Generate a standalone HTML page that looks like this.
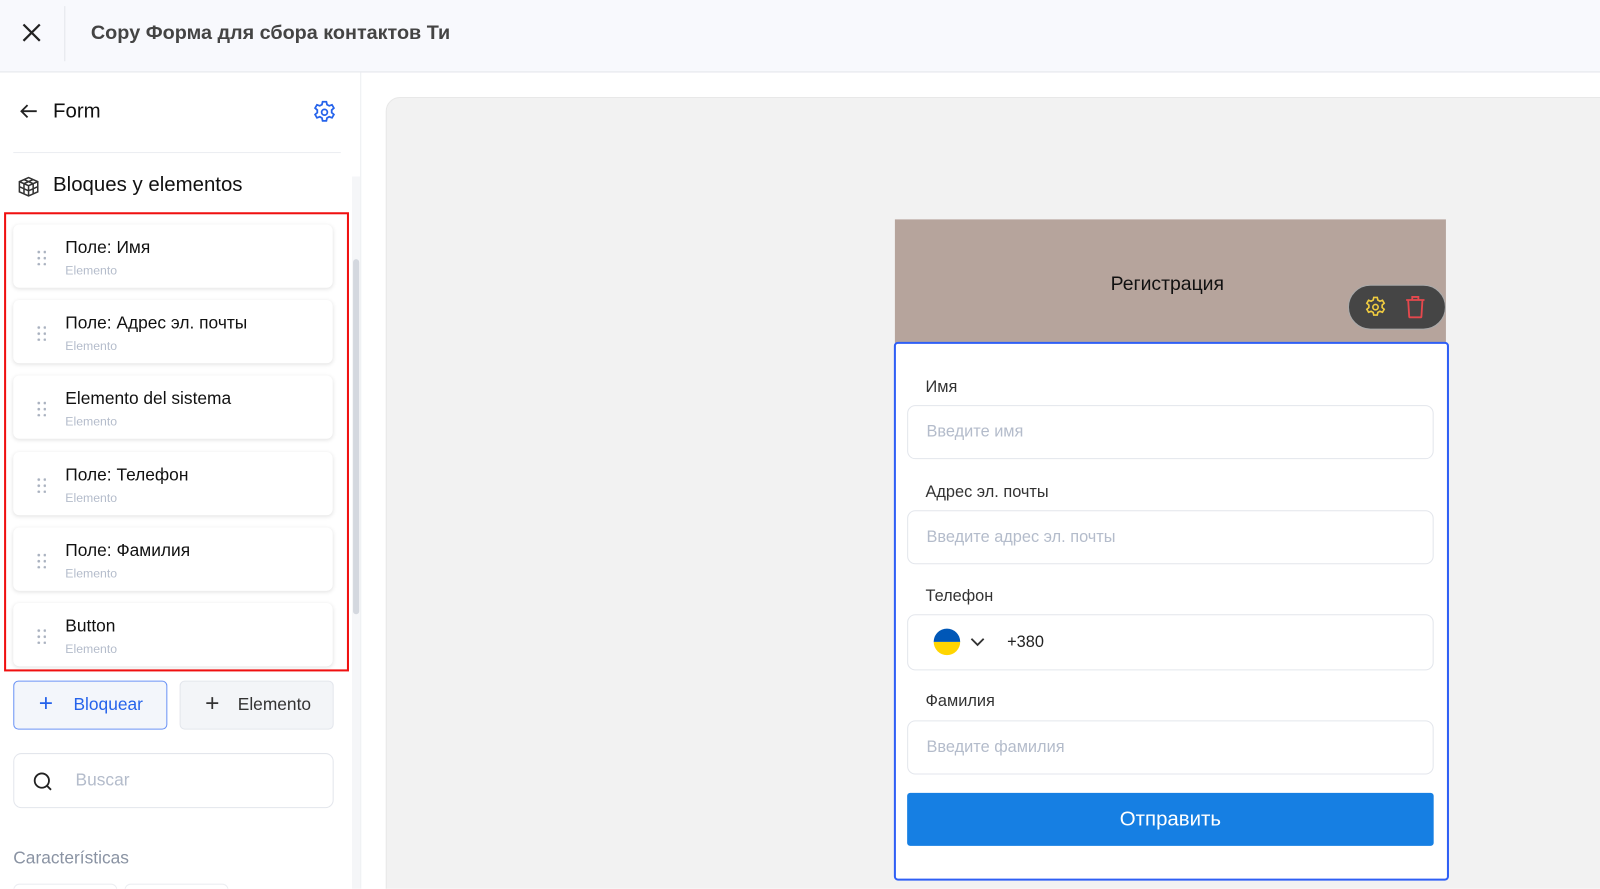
<!DOCTYPE html>
<html><head><meta charset="utf-8"><style>
*{box-sizing:border-box;margin:0;padding:0}
html,body{width:1600px;height:889px;overflow:hidden}
body{font-family:"Liberation Sans","Noto Sans CJK SC",sans-serif;background:#fff;color:#111}
#clip{position:relative;width:1600px;height:889px;overflow:hidden}
#w{position:absolute;left:0;top:0;width:1568px;height:871px;overflow:hidden;transform:scale(1.020408);transform-origin:0 0}
.hdr{position:absolute;left:0;top:0;width:1568px;height:71px;background:#f8f9fd;border-bottom:1px solid #e3e5ea}
.side{position:absolute;left:0;top:71px;width:354px;height:800px;border-right:1px solid #eceef2;background:#fff}
.card{position:absolute;left:13px;width:313px;height:62px;background:#fff;border-radius:6px;box-shadow:0 1px 4px rgba(0,0,0,.12)}
.card .t{position:absolute;left:51px;top:13px;font-size:17px;color:#111}
.card .s{position:absolute;left:51px;top:38px;font-size:12px;color:#b4bccb}
.dots{position:absolute;left:22px;top:24px;width:10px;height:16px;background-image:radial-gradient(circle,#a9b1bf 1.2px,transparent 1.5px);background-size:6px 6px}
.canvas{position:absolute;left:378px;top:95px;width:1240px;height:800px;background:#f2f2f2;border-radius:14px;border:1px solid #e8e8e8}
.lbl{position:absolute;left:907px;font-size:16px;color:#333}
.inp{position:absolute;left:889px;width:516px;height:53px;border:1px solid #e3e6ec;border-radius:8px;background:#fff;font-size:16px;color:#b4bccb;padding:17px 0 0 18px}
</style></head><body><div id="clip"><div id="w">
<div class="hdr">
<svg style="position:absolute;left:21px;top:22px" width="20" height="20" viewBox="0 0 20 20"><path d="M2 2L18 18M18 2L2 18" stroke="#222" stroke-width="2.2"/></svg>
<div style="position:absolute;left:63px;top:6px;width:1px;height:54px;background:#e3e5ea"></div>
<div style="position:absolute;left:89px;top:21px;font-size:19.4px;font-weight:bold;color:#444">Copy Форма для сбора контактов Ти</div>
</div>
<div class="side">
<svg style="position:absolute;left:18px;top:30px" width="20" height="16" viewBox="0 0 20 16"><path d="M18 8H3M9 2L3 8L9 14" stroke="#222" stroke-width="1.8" fill="none"/></svg>
<div style="position:absolute;left:52px;top:27px;font-size:20px">Form</div>
<svg style="position:absolute;left:305px;top:26px" width="26" height="26" viewBox="0 0 24 24" fill="none" stroke="#2563eb" stroke-width="1.6"><path d="M10.3 2.5h3.4l.6 2.6 2 1.1 2.5-.9 1.7 2.9-2 1.8v2.3l2 1.8-1.7 2.9-2.5-.9-2 1.1-.6 2.6h-3.4l-.6-2.6-2-1.1-2.5.9-1.7-2.9 2-1.8V10l-2-1.8 1.7-2.9 2.5.9 2-1.1z"/><circle cx="12" cy="12" r="2.6"/></svg>
<div style="position:absolute;left:13px;top:78px;width:321px;height:1px;background:#eceef2"></div>
<svg style="position:absolute;left:17px;top:101px" width="22" height="22" viewBox="0 0 22 22" fill="none" stroke="#333" stroke-width="1.5"><path d="M11 2L20 6V16L11 20L2 16V6Z M2 6L11 10L20 6 M11 10V20 M6.5 4L15.5 8V18 M15.5 4L6.5 8V18 M2 11L11 15L20 11"/></svg>
<div style="position:absolute;left:52px;top:99px;font-size:20px">Bloques y elementos</div>
<div style="position:absolute;left:345px;top:102px;width:8px;height:700px;background:#f5f6f8"></div>
<div style="position:absolute;left:346px;top:183px;width:6px;height:348px;background:#d4d8df;border-radius:3px"></div>
</div>
<div class="card" style="top:220px"><div class="dots"></div><div class="t">Поле: Имя</div><div class="s">Elemento</div></div>
<div class="card" style="top:294px"><div class="dots"></div><div class="t">Поле: Адрес эл. почты</div><div class="s">Elemento</div></div>
<div class="card" style="top:368px"><div class="dots"></div><div class="t">Elemento del sistema</div><div class="s">Elemento</div></div>
<div class="card" style="top:443px"><div class="dots"></div><div class="t">Поле: Телефон</div><div class="s">Elemento</div></div>
<div class="card" style="top:517px"><div class="dots"></div><div class="t">Поле: Фамилия</div><div class="s">Elemento</div></div>
<div class="card" style="top:591px"><div class="dots"></div><div class="t">Button</div><div class="s">Elemento</div></div>
<div style="position:absolute;left:4px;top:208px;width:338px;height:450px;border:2px solid #f01010"></div>
<div style="position:absolute;left:13px;top:667px;width:151px;height:48px;border:1px solid #6b93f5;border-radius:5px;background:#f3f6fb;color:#2563eb;font-size:17px;padding:13px 0 0 58px">Bloquear<span style="position:absolute;left:24px;top:8px;font-size:24px;font-weight:300">+</span></div>
<div style="position:absolute;left:176px;top:667px;width:151px;height:48px;border:1px solid #e3e6ec;border-radius:5px;background:#f3f5f8;color:#333;font-size:17px;padding:13px 0 0 56px">Elemento<span style="position:absolute;left:24px;top:8px;font-size:24px;font-weight:300">+</span></div>
<div style="position:absolute;left:13px;top:738px;width:314px;height:54px;border:1px solid #e3e6ec;border-radius:8px;color:#b4bccb;font-size:17px;padding:16px 0 0 60px">Buscar
<svg style="position:absolute;left:18px;top:17px" width="20" height="20" viewBox="0 0 20 20" fill="none" stroke="#222" stroke-width="1.8"><circle cx="9" cy="9" r="7"/><path d="M14 14L18 18"/></svg></div>
<div style="position:absolute;left:13px;top:831px;font-size:17px;color:#8a93a3">Características</div>
<div style="position:absolute;left:13px;top:866px;width:102px;height:30px;border:1px solid #eceef2;border-radius:6px"></div>
<div style="position:absolute;left:122px;top:866px;width:102px;height:30px;border:1px solid #eceef2;border-radius:6px"></div>

<div class="canvas"></div>
<div style="position:absolute;left:877px;top:215px;width:540px;height:121px;background:#b6a49c"></div>
<div style="position:absolute;left:877px;top:268px;width:534px;text-align:center;font-size:19px;color:#111">Регистрация</div>
<div style="position:absolute;left:1321px;top:279px;width:96px;height:44px;background:#454545;border-radius:22px;border:1px solid #aaa"></div>
<svg style="position:absolute;left:1336px;top:289px" width="24" height="24" viewBox="0 0 24 24" fill="none" stroke="#f0cc40" stroke-width="1.6"><path d="M10.3 2.5h3.4l.6 2.6 2 1.1 2.5-.9 1.7 2.9-2 1.8v2.3l2 1.8-1.7 2.9-2.5-.9-2 1.1-.6 2.6h-3.4l-.6-2.6-2-1.1-2.5.9-1.7-2.9 2-1.8V10l-2-1.8 1.7-2.9 2.5.9 2-1.1z"/><circle cx="12" cy="12" r="2.6"/></svg>
<svg style="position:absolute;left:1376px;top:289px" width="22" height="24" viewBox="0 0 22 24" fill="none" stroke="#e5484d" stroke-width="1.8"><path d="M2 5H20M8 5V2H14V5M4 5L5 21Q5 22 6 22H16Q17 22 17 21L18 5"/></svg>
<div style="position:absolute;left:876px;top:335px;width:544px;height:528px;border:2px solid #2f5ff5;border-radius:4px;background:#fff"></div>
<div class="lbl" style="top:371px">Имя</div>
<div class="inp" style="top:397px">Введите имя</div>
<div class="lbl" style="top:474px">Адрес эл. почты</div>
<div class="inp" style="top:500px">Введите адрес эл. почты</div>
<div class="lbl" style="top:576px">Телефон</div>
<div class="inp" style="top:602px;height:55px;color:#222;padding:18px 0 0 97px">+380</div>
<div style="position:absolute;left:915px;top:629px;width:26px;height:13px;background:#ffd500;border-radius:0 0 13px 13px"></div>
<div style="position:absolute;left:915px;top:616px;width:26px;height:13px;background:#0057b7;border-radius:13px 13px 0 0"></div>
<svg style="position:absolute;left:951px;top:624px" width="14" height="10" viewBox="0 0 14 10"><path d="M1 2L7 8L13 2" stroke="#333" stroke-width="1.8" fill="none"/></svg>
<div class="lbl" style="top:679px">Фамилия</div>
<div class="inp" style="top:706px">Введите фамилия</div>
<div style="position:absolute;left:889px;top:777px;width:516px;height:52px;background:#167fe3;border-radius:3px;color:#fff;font-size:20px;text-align:center;padding-top:15px">Отправить</div>
</div></div></body></html>
